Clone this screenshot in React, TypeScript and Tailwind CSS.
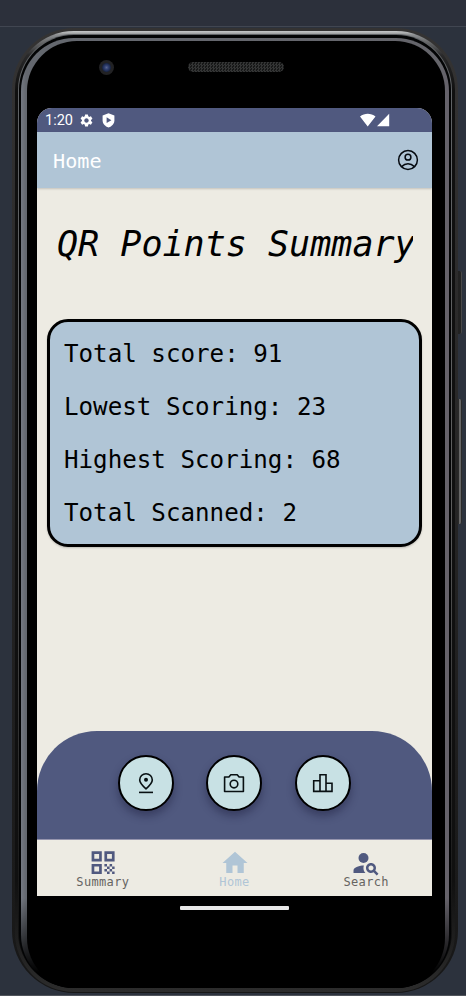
import React from "react";
import { MdHome, MdPersonSearch, MdSettings } from "react-icons/md";

const MONO = "font-['DejaVu_Sans_Mono','Liberation_Mono',monospace]";

function ShieldIcon() {
  return (
    <svg width="13" height="15" viewBox="0 0 13 15">
      <path d="M6.5 .3 12.4 2.4v4.8c0 3.4-2.4 6.1-5.9 7.3C3 13.3.6 10.6.6 7.2V2.4Z" fill="#fff" />
      <path d="M4.6 4.3v5.8l4.8-2.9Z" fill="#50597f" />
    </svg>
  );
}

function AccountIcon() {
  return (
    <svg width="22" height="22" viewBox="0 0 22 22" fill="none" stroke="#050a10" strokeWidth="1.5">
      <circle cx="11" cy="11" r="9.4" />
      <circle cx="11" cy="8.2" r="2.9" />
      <path d="M4.6 17.6c2-2 4-2.900 6.400-2.900s4.400.9 6.400 2.900" />
    </svg>
  );
}

function PinIcon() {
  return (
    <svg width="24" height="24" viewBox="0 0 24 24" fill="none" stroke="#081012" strokeWidth="1.6">
      <path d="M12 17.800c-4-3.500-6.300-6.100-6.300-8.800A6.300 6.300 0 0 1 18.300 9c0 2.700-2.300 5.300-6.300 8.800Z" />
      <circle cx="12" cy="8.700" r="2" fill="#081012" stroke="none" />
      <path d="M5 21.400h14" />
    </svg>
  );
}

function CameraIcon() {
  return (
    <svg width="24" height="24" viewBox="0 0 24 24" fill="none" stroke="#081012" strokeWidth="1.6">
      <path d="M2.600 6h4.300l1.900-2.200h6.400L17.100 6h4.300v14.500H2.600Z" strokeLinejoin="round" />
      <circle cx="12" cy="13.100" r="3.800" />
    </svg>
  );
}

function LeaderboardIcon() {
  return (
    <svg width="24" height="24" viewBox="0 0 24 24" fill="none" stroke="#081012" strokeWidth="1.6">
      <path d="M9 20.400H2.700V9.700H9M9 20.400V3.700h6v16.700ZM15 12.300h6v8.100h-6" />
    </svg>
  );
}

function QrIcon() {
  return (
    <svg width="24" height="24" viewBox="0 0 24 24" fill="#50597f">
      <path
        fillRule="evenodd"
        d="M.6.3h10.200v10.200H.6ZM3.300 3v4.800h4.800V3ZM13.400.3h10.200v10.200H13.400ZM16.100 3v4.800h4.800V3ZM.6 12.900h10.200v10.200H.6ZM3.300 15.600v4.800h4.800v-4.800Z"
      />
      <path d="M13.400 12.900H16v2.600h-2.600ZM18.600 12.900h2.500v2.600h-2.500ZM16 15.500h2.600V18H16ZM21.100 15.500h2.500V18h-2.500ZM13.400 18H16v2.600h-2.600ZM18.600 18h2.500v2.600h-2.500ZM16 20.600h2.600v2.500H16ZM21.100 20.600h2.500v2.500h-2.500Z" />
    </svg>
  );
}

function StatusBar() {
  return (
    <div className="flex h-6 items-center bg-[#50597f] pl-2 font-[Roboto,sans-serif] text-[14.5px] text-white">
      <span className="w-[33.500px] pt-[3px] leading-none">1:20</span>
      <MdSettings size={15} />
      <span className="ml-[8px]">
        <ShieldIcon />
      </span>
      <svg className="ml-auto mr-[42px]" width="30" height="14" viewBox="0 0 30 14" fill="#fff">
        <path d="M0 3.600C4.500-.2 11-.2 15.500 3.600L7.700 13.500ZM29.200.8v12.500H17Z" />
      </svg>
    </div>
  );
}

function ActionButton({ children }: { children: React.ReactNode }) {
  return (
    <button className="flex size-14 items-center justify-center rounded-full border-2 border-black bg-[#c8e1e4] shadow-[0_5px_8px_rgba(20,20,50,0.4)]">
      {children}
    </button>
  );
}

function NavItem({ icon, label, color }: { icon: React.ReactNode; label: string; color: string }) {
  return (
    <div className="flex flex-1 flex-col items-center pt-[10px]">
      <div className="flex h-[25px] items-center">{icon}</div>
      <span className={`text-[12px] leading-[14px] tracking-[0.350px] ${color}`}>{label}</span>
    </div>
  );
}

const stats = ["Total score: 91", "Lowest Scoring: 23", "Highest Scoring: 68", "Total Scanned: 2"];

function Screen() {
  return (
    <div className={`ml-[10px] flex h-[788px] w-[395px] flex-col overflow-hidden rounded-t-[15px] bg-[#edebe3] ${MONO}`}>
      <StatusBar />
      <header className="z-10 flex h-[56px] shrink-0 items-center justify-between bg-[#b0c5d6] pl-4 pr-[13px] shadow-[0_1px_2px_rgba(0,0,0,0.18)]">
        <span className="pt-[2px] text-[20.150px] text-white">Home</span>
        <AccountIcon />
      </header>
      <h1 className="ml-[19px] mt-[36px] w-[357px] overflow-hidden whitespace-nowrap pl-px text-[35.050px] leading-[40px] text-black italic">
        QR Points Summary
      </h1>
      <section className="mx-[10px] mt-[55px] flex h-[228px] flex-col rounded-[21px] border-[3px] border-black bg-[#b0c5d6] pl-[14px] pt-[6px] shadow-[0_1px_2px_rgba(0,0,0,0.2)]">
        {stats.map((s) => (
          <p key={s} className="h-[53px] text-[24.200px] leading-[53px] whitespace-nowrap text-black">
            {s}
          </p>
        ))}
      </section>
      <div className="mt-auto flex h-[108px] shrink-0 justify-center gap-[32.500px] rounded-t-[60px] bg-[#50597f] pr-[0.500px] pt-6">
        <ActionButton>
          <PinIcon />
        </ActionButton>
        <ActionButton>
          <CameraIcon />
        </ActionButton>
        <ActionButton>
          <LeaderboardIcon />
        </ActionButton>
      </div>
      <nav className="flex h-[57px] shrink-0 border-t border-[#9695ae]">
        <NavItem icon={<QrIcon />} label="Summary" color="text-[#666461]" />
        <NavItem icon={<MdHome size={30} color="#b0c5d6" />} label="Home" color="text-[#b0c5d6]" />
        <NavItem icon={<MdPersonSearch size={30} color="#50597f" />} label="Search" color="text-[#666461]" />
      </nav>
    </div>
  );
}

export default function App() {
  return (
    <div className="h-[996px] w-[466px] overflow-hidden bg-[#2c323d]">
      <div className="h-[27px] border-b border-[#414651] bg-[#2c303b]" />
      <div className="relative ml-3 mt-px h-[965px] w-[446px]">
        <div className="absolute left-[446px] top-[243px] h-[63px] w-[4px] rounded-r-[2px] border-r border-[#484848] bg-[#222]" />
        <div className="absolute left-[446px] top-[371px] h-[125px] w-[4px] rounded-r-[2px] border-x border-[#2a2a2a] bg-[#666]" />
        <div className="h-full rounded-[62px] bg-linear-to-b from-[#343333] to-[#171717] px-[3px] pt-[3px] pb-px">
          <div className="h-full rounded-[59px] bg-[linear-gradient(to_bottom,#c8cacb_0px,#8b8d8f_4px,#29292a_24px,#101010_60px,#101010_850px,#2c2c2c_960px)] px-[3px] pt-[3px] pb-[4px]">
            <div className="h-full rounded-[56px] bg-linear-to-b from-[#606366] via-[#5d5d5d] to-[#090909] px-px pt-px">
              <div className="h-full rounded-[55px] bg-[#030405] px-[2px] pt-[3px]">
                <div className="h-full rounded-[53px] bg-[linear-gradient(to_bottom,transparent_860px,#000_935px),linear-gradient(to_right,#747982_0px,#64686f_5px,#65656b_420px,#65616a)] pl-[6px] pr-[4px] pt-[3px]">
                  <div className="h-full rounded-[50px] bg-black">
                    <div className="flex h-[67px] items-start pl-[72px] pt-[19px]">
                      <div className="flex size-[15px] items-center justify-center rounded-full bg-[#222224]">
                        <div className="size-[9px] rounded-full bg-[radial-gradient(circle,#59658d_0px,#303f70_2px,#101b35_5px)]" />
                      </div>
                      <div className="ml-[74px] mt-[2px] h-[10px] w-[96px] rounded-full bg-[#101111] bg-[repeating-conic-gradient(#343535_0_25%,#171818_0_50%)] bg-[length:3px_3px]" />
                    </div>
                    <Screen />
                    <div className="ml-[153px] mt-[10px] h-[4px] w-[109px] rounded-[1px] bg-[#e8e8e8]" />
                  </div>
                </div>
              </div>
            </div>
          </div>
        </div>
      </div>
      <div className="mt-[2px] h-px bg-[#50545b]" />
    </div>
  );
}
